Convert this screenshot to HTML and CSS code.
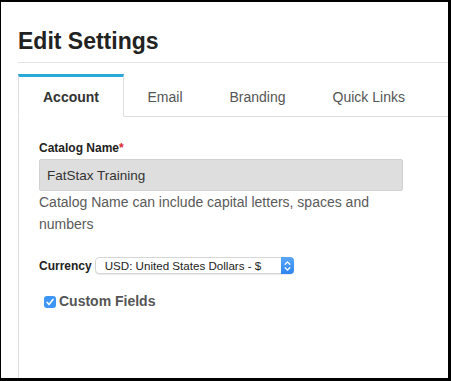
FILE: index.html
```html
<!DOCTYPE html>
<html>
<head>
<meta charset="utf-8">
<link rel="stylesheet" href="styles.css">
</head>
<body>
<div class="frame">
  <div class="header">
    <h1 class="title">Edit Settings</h1>
  </div>
  <ul class="tabs">
    <li class="tab active">Account</li>
    <li class="tab">Email</li>
    <li class="tab">Branding</li>
    <li class="tab">Quick Links</li>
  </ul>
  <div class="panel">
    <div class="label">Catalog Name<span class="req">*</span></div>
    <div class="input">FatStax Training</div>
    <div class="help">Catalog Name can include capital letters, spaces and numbers</div>
    <div class="currency-row">
      <span class="label">Currency</span>
      <div class="select">
        <span class="select-text">USD: United States Dollars - $</span>
        <span class="stepper">
          <svg width="13" height="16" viewBox="0 0 13 16"><path d="M4.2 6.2 L6.5 3.9 L8.8 6.2 M4.2 9.8 L6.5 12.1 L8.8 9.8" fill="none" stroke="#fff" stroke-width="1.3" stroke-linecap="round" stroke-linejoin="round"/></svg>
        </span>
      </div>
    </div>
    <div class="check-row">
      <span class="checkbox">
        <svg width="12" height="12" viewBox="0 0 12 12"><path d="M3 6.3 L5 8.4 L9 3.4" fill="none" stroke="#fff" stroke-width="1.6" stroke-linecap="round" stroke-linejoin="round"/></svg>
      </span>
      <span class="check-label">Custom Fields</span>
    </div>
  </div>
</div>
</body>
</html>
```
FILE: styles.css
```css
* { box-sizing: border-box; }
html, body { margin: 0; padding: 0; background: #fff; }
body { font-family: "Liberation Sans", Arial, sans-serif; }

.frame {
  width: 451px;
  height: 381px;
  border-style: solid;
  border-color: #000;
  border-width: 2px 3px 3px 1px;
  display: flex;
  flex-direction: column;
  overflow: hidden;
}

.header {
  margin-left: 17px;
  padding-top: 25px;
  padding-bottom: 7px;
  border-bottom: 1px solid #e4e4e4;
}
.title {
  margin: 0;
  font-size: 23px;
  line-height: 28px;
  font-weight: bold;
  color: #222;
}

.tabs {
  list-style: none;
  margin: 11px 0 0 17px;
  padding: 0;
  display: flex;
  border-bottom: 1px solid #dedede;
}
.tab {
  font-size: 14px;
  line-height: 20px;
  color: #555;
  padding: 10px 23.5px 9px;
  border-top: 3px solid transparent;
}
.tab.active {
  color: #333;
  font-weight: bold;
  background: #fff;
  padding: 10px 24px 9px;
  border: 1px solid #dedede;
  border-top: 3px solid #29a9d8;
  border-bottom: 1px solid #fff;
  margin-bottom: -1px;
}

.panel {
  flex: 1;
  margin-left: 17px;
  border-left: 1px solid #dedede;
  padding: 23px 0 0 20px;
}

.label {
  font-size: 12px;
  line-height: 16px;
  font-weight: bold;
  color: #222;
  margin-bottom: 3px;
}
.req { color: #d9262c; }

.input {
  width: 364px;
  height: 32px;
  background: #dedede;
  border: 1px solid #d2d2d2;
  border-radius: 2px;
  padding: 1px 7px 0;
  font-size: 13.5px;
  line-height: 29px;
  color: #333;
}

.help {
  width: 364px;
  font-size: 14px;
  line-height: 22px;
  color: #5a5a5a;
}

.currency-row {
  display: flex;
  align-items: center;
  margin-top: 22px;
}
.currency-row .label { margin: 0 3px 0 0; }

.select {
  width: 199px;
  height: 17px;
  display: flex;
  align-items: stretch;
  border: 1px solid #d6d6d6;
  border-radius: 4px;
  box-shadow: 0 1px 1px rgba(0,0,0,0.08);
  background: #fff;
}
.select-text {
  flex: 1;
  padding-left: 9px;
  font-size: 11.6px;
  line-height: 15px;
  color: #222;
}
.stepper {
  width: 13px;
  margin: -1px -1px -1px 0;
  border-radius: 0 4px 4px 0;
  background: linear-gradient(#5aa6f8, #2f86f2);
  display: flex;
  align-items: center;
  justify-content: center;
}
.stepper svg { display: block; }

.check-row {
  display: flex;
  align-items: center;
  margin-top: 17px;
  padding-left: 5px;
  height: 20px;
}
.checkbox {
  width: 12px;
  height: 12px;
  border-radius: 3px;
  background: #3d95f6;
  display: flex;
  align-items: center;
  justify-content: center;
  margin-right: 3px;
  margin-top: 2px;
}
.checkbox svg { display: block; }
.check-label {
  font-size: 14px;
  font-weight: bold;
  color: #555;
  line-height: 20px;
}
```
